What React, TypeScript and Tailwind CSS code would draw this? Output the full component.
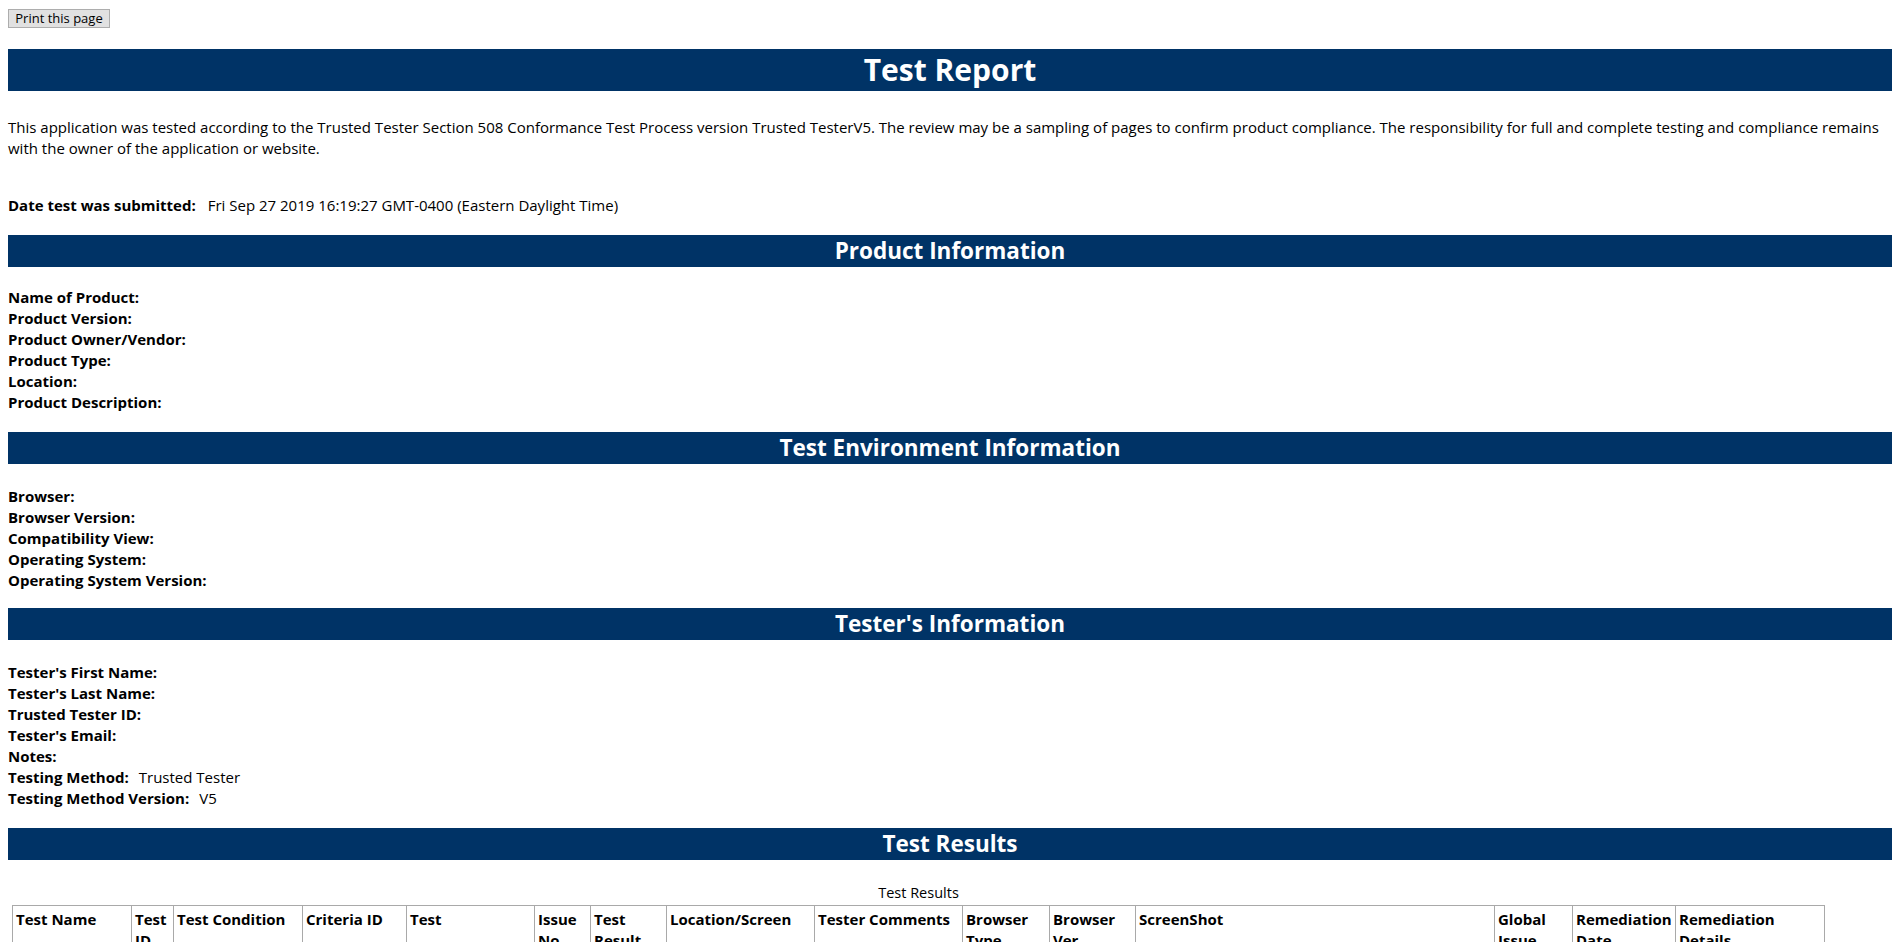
import React from "react"

const font = { fontFamily: '"Open Sans", "Noto Sans", sans-serif' }

const product = [
  "Name of Product:",
  "Product Version:",
  "Product Owner/Vendor:",
  "Product Type:",
  "Location:",
  "Product Description:",
]

const environment = [
  "Browser:",
  "Browser Version:",
  "Compatibility View:",
  "Operating System:",
  "Operating System Version:",
]

const tester: [string, string][] = [
  ["Tester's First Name:", ""],
  ["Tester's Last Name:", ""],
  ["Trusted Tester ID:", ""],
  ["Tester's Email:", ""],
  ["Notes:", ""],
  ["Testing Method:", "Trusted Tester"],
  ["Testing Method Version:", "V5"],
]

const columns: [string, string][] = [
  ["Test Name", "w-[119px]"],
  ["Test ID", "w-[42px]"],
  ["Test Condition", "w-[129px]"],
  ["Criteria ID", "w-[104px]"],
  ["Test", "w-[128px]"],
  ["Issue No", "w-[56px]"],
  ["Test Result", "w-[76px]"],
  ["Location/Screen", "w-[148px]"],
  ["Tester Comments", "w-[148px]"],
  ["Browser Type", "w-[87px]"],
  ["Browser Ver", "w-[86px]"],
  ["ScreenShot", "w-[359px]"],
  ["Global Issue", "w-[78px]"],
  ["Remediation Date", "w-[103px]"],
  ["Remediation Details", "w-[149px]"],
]

function SectionBar({ title }: { title: string }) {
  return (
    <h2 className="bg-[#003366] text-center text-[22.5px] font-bold leading-[32px] text-white">
      {title}
    </h2>
  )
}

function Field({ label, value }: { label: string; value?: string }) {
  return (
    <div className="leading-[21px]">
      <span className="font-bold">{label}</span>
      {value ? <span className="ml-[10px]">{value}</span> : null}
    </div>
  )
}

export default function App() {
  return (
    <div style={font} className="min-h-screen bg-white px-2 pt-[6px] text-[15px] text-black">
      <button className="h-[19px] w-[102px] border border-[#adadad] bg-[#e1e1e1] text-[13px] leading-[17px] text-black">
        Print this page
      </button>

      <h1 className="mt-[20px] bg-[#003366] text-center text-[30px] font-bold leading-[42px] text-white">
        Test Report
      </h1>

      <p className="mt-[26px] leading-[21px]">
        This application was tested according to the Trusted Tester Section 508 Conformance Test Process version
        Trusted TesterV5. The review may be a sampling of pages to confirm product compliance. The responsibility
        for full and complete testing and compliance remains with the owner of the application or website.
      </p>

      <div className="mt-[35px] leading-[22px]">
        <span className="font-bold">Date test was submitted:</span>
        <span className="ml-[12px]">Fri Sep 27 2019 16:19:27 GMT-0400 (Eastern Daylight Time)</span>
      </div>

      {/* Product */}
      <div className="mt-[19px]">
        <SectionBar title="Product Information" />
      </div>
      <div className="mt-[20.5px] flex flex-col">
        {product.map((p) => (
          <Field key={p} label={p} />
        ))}
      </div>

      {/* Environment */}
      <div className="mt-[19px]">
        <SectionBar title="Test Environment Information" />
      </div>
      <div className="mt-[22px] flex flex-col">
        {environment.map((p) => (
          <Field key={p} label={p} />
        ))}
      </div>

      {/* Tester */}
      <div className="mt-[17px]">
        <SectionBar title="Tester's Information" />
      </div>
      <div className="mt-[22px] flex flex-col">
        {tester.map(([l, v]) => (
          <Field key={l} label={l} value={v} />
        ))}
      </div>

      {/* Results */}
      <div className="mt-[19px]">
        <SectionBar title="Test Results" />
      </div>

      <table className="ml-[4px] mt-[23px] table-fixed border-collapse">
        <caption className="pb-[2px] text-[14.5px] leading-[20px]">Test Results</caption>
        <thead>
          <tr>
            {columns.map(([c, w]) => (
              <th
                key={c}
                className={`${w} border border-[#a9a9a9] px-[3px] py-[3px] text-left align-top font-bold leading-[21px]`}
              >
                {c}
              </th>
            ))}
          </tr>
        </thead>
        <tbody>
          <tr>
            {columns.map(([c]) => (
              <td key={c} className="h-[40px] border border-[#a9a9a9] px-[3px]"></td>
            ))}
          </tr>
        </tbody>
      </table>
    </div>
  )
}
